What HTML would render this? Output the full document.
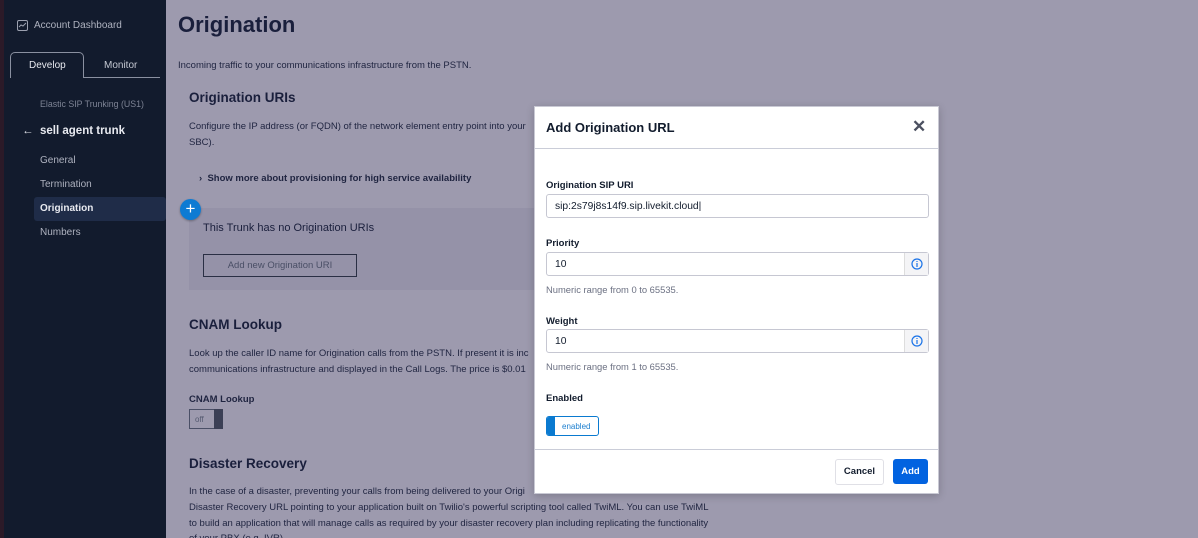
<!DOCTYPE html>
<html><head><style>
*{box-sizing:border-box;margin:0;padding:0}
html,body{width:1198px;height:538px;overflow:hidden}
body{background:#9d9aae;font-family:"Liberation Sans",sans-serif;position:relative}
.a{position:absolute;white-space:nowrap}
#side{position:absolute;left:0;top:0;width:166px;height:538px;background:#121b2d}
#strip{position:absolute;left:0;top:0;width:4px;height:538px;background:#2b1a28}
.d{color:#1a1f3c}
.p{font-size:9.5px;color:#1f2440}
.modal{position:absolute;left:534px;top:106px;width:405px;height:388px;background:#fff;border:1px solid #c9c9d4;box-shadow:0 2px 8px rgba(0,0,0,.2)}
.lbl{font-size:9.5px;font-weight:bold;color:#121c2d}
.inp{position:absolute;left:11px;width:383px;height:24px;border:1px solid #c6c7d2;border-radius:3px;font-size:10.3px;padding:6px 8px;color:#121c2d}
.info{position:absolute;right:0;top:0;width:24px;height:22px;background:#f4f4f6;border-left:1px solid #ddd}
.hint{font-size:9.4px;color:#6b7082}
</style></head><body>
<div id="side">
<div id="strip"></div>
<svg class="a" style="left:17px;top:20px" width="11" height="11" viewBox="0 0 11 11"><rect x="0.5" y="0.5" width="10" height="10" rx="1.5" fill="none" stroke="#9ca1b0"/><path d="M2 7l2-2 2 1 3-3" fill="none" stroke="#9ca1b0"/></svg>
<div class="a" style="left:34px;top:20px;font-size:10px;color:#aeb2bf">Account Dashboard</div>
<div class="a" style="left:10px;top:52px;width:74px;height:26px;border:1px solid #8a90a0;border-bottom:none;border-radius:5px 5px 0 0"></div>
<div class="a" style="left:84px;top:77px;width:76px;height:1px;background:#8a90a0"></div>
<div class="a" style="left:29px;top:60px;font-size:10px;color:#e6e8ee">Develop</div>
<div class="a" style="left:104px;top:60px;font-size:10px;color:#c4c8d2">Monitor</div>
<div class="a" style="left:40px;top:99px;font-size:8.8px;color:#7d8394">Elastic SIP Trunking (US1)</div>
<div class="a" style="left:22px;top:125px;font-size:11.5px;color:#e8eaf0">&larr;</div>
<div class="a" style="left:40px;top:125px;font-size:11.5px;font-weight:bold;color:#e8eaf0">sell agent trunk</div>
<div class="a" style="left:40px;top:155px;font-size:10px;color:#aeb2bf">General</div>
<div class="a" style="left:40px;top:179px;font-size:10px;color:#aeb2bf">Termination</div>
<div class="a" style="left:34px;top:197px;width:132px;height:24px;background:#1f2c48;border-radius:3px"></div>
<div class="a" style="left:40px;top:203px;font-size:10px;font-weight:bold;color:#e8eaf0">Origination</div>
<div class="a" style="left:40px;top:227px;font-size:10px;color:#aeb2bf">Numbers</div>
</div>

<div class="a d" style="left:178px;top:12px;font-size:22px;font-weight:bold">Origination</div>
<div class="a p" style="left:178px;top:60px">Incoming traffic to your communications infrastructure from the PSTN.</div>
<div class="a d" style="left:189px;top:90px;font-size:13.5px;font-weight:bold">Origination URIs</div>
<div class="a p" style="left:189px;top:121px">Configure the IP address (or FQDN) of the network element entry point into your</div>
<div class="a p" style="left:189px;top:137px">SBC).</div>
<div class="a p" style="left:199px;top:173px;font-weight:bold">›&nbsp; Show more about provisioning for high service availability</div>
<div class="a" style="left:189px;top:208px;width:350px;height:82px;background:#9592a8"></div>
<div class="a" style="left:180px;top:199px;width:21px;height:21px;border-radius:50%;background:#0d7bd3;color:#fff;font-size:17px;line-height:20px;text-align:center;box-shadow:0 1px 2px rgba(0,0,0,.3)">+</div>
<div class="a d" style="left:203px;top:222px;font-size:11px">This Trunk has no Origination URIs</div>
<div class="a" style="left:203px;top:254px;width:154px;height:23px;border:1px solid #2a2f44;font-size:9.5px;color:#4a4f66;text-align:center;line-height:21px">Add new Origination URI</div>
<div class="a d" style="left:189px;top:317px;font-size:13.5px;font-weight:bold">CNAM Lookup</div>
<div class="a p" style="left:189px;top:348px">Look up the caller ID name for Origination calls from the PSTN. If present it is inc</div>
<div class="a p" style="left:189px;top:364px">communications infrastructure and displayed in the Call Logs. The price is $0.01</div>
<div class="a p" style="left:189px;top:394px;font-weight:bold">CNAM Lookup</div>
<div class="a" style="left:189px;top:409px;width:34px;height:20px;border:1px solid #4a4f66"></div>
<div class="a" style="left:214px;top:409px;width:9px;height:20px;background:#3b3f55"></div>
<div class="a" style="left:195px;top:415px;font-size:8px;color:#555a70">off</div>
<div class="a d" style="left:189px;top:456px;font-size:13.5px;font-weight:bold">Disaster Recovery</div>
<div class="a p" style="left:189px;top:486px">In the case of a disaster, preventing your calls from being delivered to your Origi</div>
<div class="a p" style="left:189px;top:502px">Disaster Recovery URL pointing to your application built on Twilio's powerful scripting tool called TwiML. You can use TwiML</div>
<div class="a p" style="left:189px;top:518px">to build an application that will manage calls as required by your disaster recovery plan including replicating the functionality</div>
<div class="a p" style="left:189px;top:533px">of your PBX (e.g. IVR).</div>

<div class="modal">
<div class="a" style="left:11px;top:13px;font-size:13px;font-weight:bold;color:#121c2d">Add Origination URL</div>
<div class="a" style="left:377px;top:10px;font-size:17px;color:#4b5060;font-weight:bold">✕</div>
<div class="a" style="left:0;top:41px;width:403px;height:1px;background:#cacdd8"></div>
<div class="a lbl" style="left:11px;top:73px">Origination SIP URI</div>
<div class="inp" style="top:87px">sip:2s79j8s14f9.sip.livekit.cloud|</div>
<div class="a lbl" style="left:11px;top:131px">Priority</div>
<div class="inp" style="top:145px">10<div class="info"><svg style="position:absolute;left:6px;top:5px" width="12" height="12" viewBox="0 0 12 12"><circle cx="6" cy="6" r="5" fill="none" stroke="#1a73e8" stroke-width="1.2"/><path d="M6 5v4M6 3v1" stroke="#1a73e8" stroke-width="1.2"/></svg></div></div>
<div class="a hint" style="left:11px;top:177px">Numeric range from 0 to 65535.</div>
<div class="a lbl" style="left:11px;top:209px">Weight</div>
<div class="inp" style="top:222px">10<div class="info"><svg style="position:absolute;left:6px;top:5px" width="12" height="12" viewBox="0 0 12 12"><circle cx="6" cy="6" r="5" fill="none" stroke="#1a73e8" stroke-width="1.2"/><path d="M6 5v4M6 3v1" stroke="#1a73e8" stroke-width="1.2"/></svg></div></div>
<div class="a hint" style="left:11px;top:254px">Numeric range from 1 to 65535.</div>
<div class="a lbl" style="left:11px;top:286px">Enabled</div>
<div class="a" style="left:11px;top:309px;width:53px;height:20px;border:1px solid #0a7ad0;border-radius:3px;overflow:hidden"><div style="position:absolute;left:0;top:0;width:8px;height:20px;background:#0a7ad0"></div><div style="position:absolute;left:15px;top:5px;font-size:8px;color:#1d7fcf">enabled</div></div>
<div class="a" style="left:0;top:342px;width:403px;height:1px;background:#cacdd8"></div>
<div class="a" style="left:300px;top:352px;width:49px;height:26px;border:1px solid #e0e0e6;border-radius:3px;font-size:9.5px;font-weight:bold;color:#121c2d;text-align:center;line-height:24px">Cancel</div>
<div class="a" style="left:358px;top:352px;width:35px;height:25px;background:#0263e0;border-radius:3px;font-size:9.5px;font-weight:bold;color:#fff;text-align:center;line-height:25px">Add</div>
</div>
</body></html>
